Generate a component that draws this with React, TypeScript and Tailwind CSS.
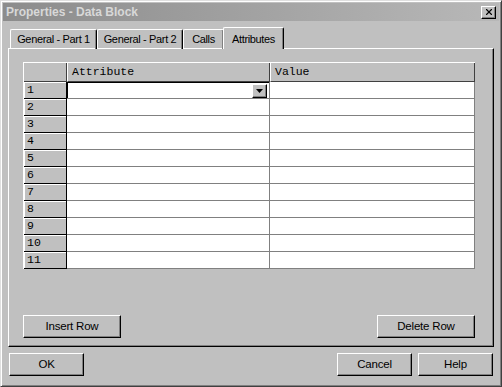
import { X } from 'lucide-react'

const font = { fontFamily: '"Liberation Sans", Arial, sans-serif' }
const mono = { fontFamily: '"Liberation Mono", "Courier New", monospace' }

const tabs = [
  { label: 'General - Part 1', w: 'w-[87px]' },
  { label: 'General - Part 2', w: 'w-[86px]' },
  { label: 'Calls', w: 'w-[41px]' },
]
const rows = [1, 2, 3, 4, 5, 6, 7, 8, 9, 10, 11]

function Button({ label, className }: { label: string; className?: string }) {
  return (
    <button
      className={`h-[23px] bg-[#c0c0c0] text-[11.5px] tracking-[-0.2px] text-black border-t border-l border-t-white border-l-white border-b border-r border-b-black border-r-black shadow-[inset_-1px_-1px_0_#808080] ${className ?? ''}`}
    >
      {label}
    </button>
  )
}

export default function App() {
  return (
    <div
      className="w-[502px] h-[387px] bg-[#c0c0c0] border-t border-l border-t-[#dfdfdf] border-l-[#dfdfdf] border-b border-r border-b-[#404040] border-r-[#404040] shadow-[inset_1px_1px_0_#ffffff,inset_-1px_-1px_0_#808080] p-[2px] flex flex-col"
      style={font}
    >
      {/* title bar */}
      <div className="h-[18px] bg-gradient-to-r from-[#8c8c8c] to-[#b8b8b8] flex items-center justify-between pl-[3px] pr-[3px]">
        <span className="text-[12px] font-bold text-[#d8d8d8]">Properties - Data Block</span>
        <div className="w-[15px] h-[13px] bg-[#c0c0c0] border-t border-l border-t-white border-l-white border-b border-r border-b-black border-r-black shadow-[inset_-1px_-1px_0_#808080] flex items-center justify-center">
          <X size={10} strokeWidth={2.6} className="text-black" />
        </div>
      </div>

      {/* tabs */}
      <div className="flex items-end pl-[7px] mt-[5px] h-[22px] relative z-10">
        {tabs.map((t) => (
          <div
            key={t.label}
            className={`${t.w} h-[20px] flex items-center justify-center text-[11px] tracking-[-0.35px] text-black border-t border-l border-t-white border-l-white border-r border-r-black shadow-[inset_-1px_0_0_#808080] rounded-t-[2px] -mb-[1px]`}
          >
            {t.label}
          </div>
        ))}
        <div className="w-[61px] h-[22px] flex justify-center pt-[3px] text-[11px] tracking-[-0.35px] text-black bg-[#c0c0c0] border-t border-l border-t-white border-l-white border-r border-r-black shadow-[inset_-1px_0_0_#808080] rounded-t-[2px] -mb-[1px] -ml-[1px]">
          Attributes
        </div>
      </div>

      {/* panel */}
      <div className="mx-[5px] h-[299px] border-t border-l border-t-white border-l-white border-b border-r border-b-black border-r-black shadow-[inset_-1px_-1px_0_#808080] flex flex-col px-[14px] pt-[13px]">
        <div className="w-[452px] border-t border-l border-t-white border-l-white">
          <div className="grid grid-cols-[43px_203px_205px] h-[19px]">
            <div className="bg-[#c0c0c0] border-r border-b border-r-[#404040] border-b-[#404040]" />
            <div className="bg-[#c0c0c0] border-l border-l-white border-r border-b border-r-[#404040] border-b-[#404040] text-[11.5px] pl-[4px] leading-[18px]" style={mono}>
              Attribute
            </div>
            <div className="bg-[#c0c0c0] border-l border-l-white border-r border-b border-r-[#404040] border-b-[#404040] text-[11.5px] pl-[4px] leading-[18px]" style={mono}>
              Value
            </div>
          </div>
          {rows.map((r) => (
            <div key={r} className="grid grid-cols-[43px_203px_205px] h-[17px]">
              <div className="bg-[#c0c0c0] border-r border-b border-r-black border-b-black shadow-[inset_1px_1px_0_#ffffff] text-[11.5px] pl-[3px] leading-[16px]" style={mono}>
                {r}
              </div>
              {r === 1 ? (
                <div className="bg-white border-b border-r border-b-[#808080] border-r-[#808080] flex">
                  <div className="flex-1 border-t border-l border-t-black border-l-black flex justify-end pr-[2px] pt-[1px]">
                    <div className="w-[15px] h-[14px] bg-[#c0c0c0] border-t border-l border-t-white border-l-white border-b border-r border-b-black border-r-black shadow-[inset_-1px_-1px_0_#808080] flex items-center justify-center">
                      <svg width="7" height="4" viewBox="0 0 7 4">
                        <path d="M0 0h7L3.5 4z" fill="#000" />
                      </svg>
                    </div>
                  </div>
                </div>
              ) : (
                <div className="bg-white border-b border-r border-b-[#808080] border-r-[#808080]" />
              )}
              <div className="bg-white border-b border-r border-b-[#808080] border-r-[#808080]" />
            </div>
          ))}
        </div>
        <div className="flex justify-between mt-[46px] w-[452px]">
          <Button label="Insert Row" className="w-[98px]" />
          <Button label="Delete Row" className="w-[98px]" />
        </div>
      </div>

      {/* bottom buttons */}
      <div className="flex items-center mt-[6px] px-[6px]">
        <Button label="OK" className="w-[75px]" />
        <div className="flex-1" />
        <Button label="Cancel" className="w-[75px]" />
        <Button label="Help" className="w-[75px] ml-[6px]" />
      </div>
    </div>
  )
}
